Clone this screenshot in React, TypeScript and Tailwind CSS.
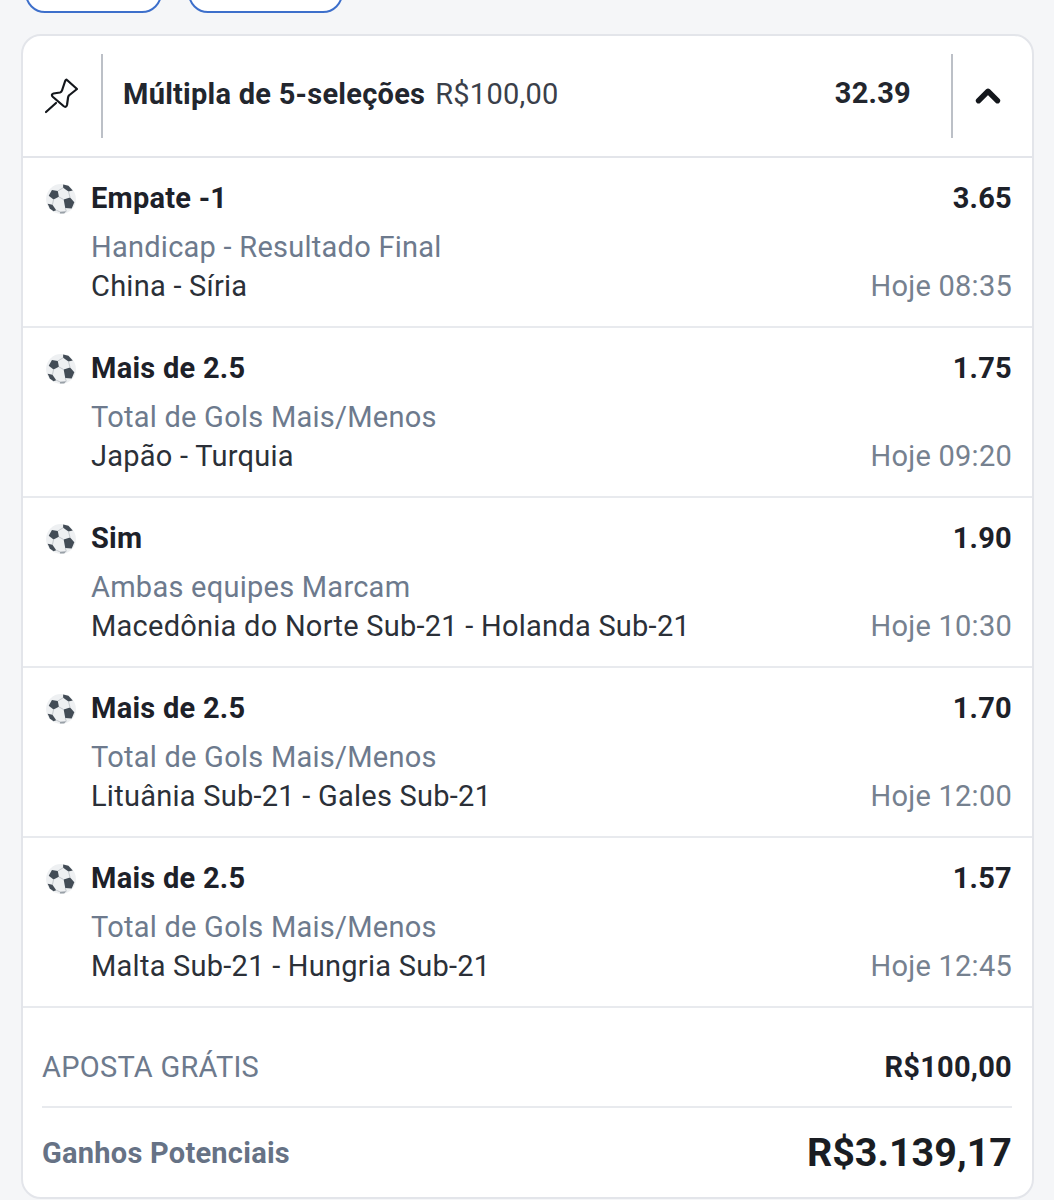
import { ChevronUp } from 'lucide-react';

const selections = [
  { pick: 'Empate -1', odd: '3.65', market: 'Handicap - Resultado Final', match: 'China - Síria', time: 'Hoje 08:35' },
  { pick: 'Mais de 2.5', odd: '1.75', market: 'Total de Gols Mais/Menos', match: 'Japão - Turquia', time: 'Hoje 09:20' },
  { pick: 'Sim', odd: '1.90', market: 'Ambas equipes Marcam', match: 'Macedônia do Norte Sub-21 - Holanda Sub-21', time: 'Hoje 10:30' },
  { pick: 'Mais de 2.5', odd: '1.70', market: 'Total de Gols Mais/Menos', match: 'Lituânia Sub-21 - Gales Sub-21', time: 'Hoje 12:00' },
  { pick: 'Mais de 2.5', odd: '1.57', market: 'Total de Gols Mais/Menos', match: 'Malta Sub-21 - Hungria Sub-21', time: 'Hoje 12:45' },
];

function Ball() {
  return (
    <svg viewBox="0 0 30 30" className="w-[32px] h-[32px] shrink-0">
      <circle cx="15" cy="15" r="14" fill="#eef0f2" />
      <path d="M6.5 6.5 L12 7.5 L13 13 L8 15.5 L3.5 12 Z" fill="#434c56" />
      <path d="M17.5 15.5 L23.5 13.5 L27.5 18 L25 24 L19 23.5 Z" fill="#434c56" />
      <path d="M17 1.5 L22 2.5 L26 7 L22 8 L17 4.5 Z" fill="#434c56" />
      <path d="M2.5 19.5 L7 20.5 L10.5 25.5 L8 26.5 L4.5 24 Z" fill="#434c56" />
      <path d="M14 27 L20 26.5 L18 28.7 L14 28.7 Z" fill="#9aa1a8" />
      <path d="M12 7.5 L17 4.5 M22 8 L23.5 13.5 M13 13 L17.5 15.5 M8 15.5 L7 20.5 M10.5 25.5 L14 27 M19 23.5 L20 26.5" stroke="#b4b9bf" strokeWidth="0.7" fill="none" />
    </svg>
  );
}

function PinIcon() {
  return (
    <svg viewBox="0 0 44 44" className="w-[44px] h-[44px]" fill="none" stroke="#14171c" strokeWidth="2.2" strokeLinecap="round" strokeLinejoin="round">
      <path d="M6 38 L16 29" />
      <path d="M27 6 L37 15 L29.5 21 Q28 22 28 24 L27 31 Q26 34 23.5 32 L13 23 Q10.5 20.5 13.5 19.5 L20 18.5 Q21.5 18 22 16.5 L25 7.5 Q26 5 27 6 Z" />
    </svg>
  );
}

function SelectionRow({ pick, odd, market, match, time }: (typeof selections)[number]) {
  return (
    <div className="h-[170px] border-b-2 border-[#e8eaee] pl-[22px] pr-[20px] pt-[23px]">
      <div className="flex items-center justify-between h-[36px]">
        <div className="flex items-center gap-[14px]">
          <Ball />
          <span className="font-bold text-[#1d2129] tracking-[0.25px]">{pick}</span>
        </div>
        <span className="font-bold text-[#1d2129] tracking-[0.25px]">{odd}</span>
      </div>
      <div className="ml-[46px] mt-[12px] text-[#6d7a8d] tracking-[0.25px] leading-[36px]">{market}</div>
      <div className="ml-[46px] mt-[3px] flex justify-between leading-[36px] tracking-[0.25px]">
        <span className="text-[#2b3038]">{match}</span>
        <span className="text-[#76818f]">{time}</span>
      </div>
    </div>
  );
}

export default function App() {
  return (
    <div className="w-[1054px] h-[1200px] overflow-hidden bg-[#f5f6f8] font-['Roboto',sans-serif] text-[29px]">
      <div className="h-[34px] pl-[25px] flex gap-[26px] overflow-hidden">
        <div className="w-[137px] h-[40px] -mt-[27px] rounded-[20px] border-[2.5px] border-[#3d6fcb] bg-white" />
        <div className="w-[155px] h-[40px] -mt-[27px] rounded-[20px] border-[2.5px] border-[#3d6fcb] bg-white" />
      </div>

      <div className="ml-[21px] w-[1013px] h-[1165px] rounded-[20px] border-2 border-[#e3e5ea] bg-white overflow-hidden">
        <div className="h-[122px] border-b-2 border-[#e3e5ea] flex items-center">
          <div className="w-[78px] flex justify-center">
            <PinIcon />
          </div>
          <div className="w-[2px] h-[84px] bg-[#bcc0c7]" />
          <div className="flex-1 flex items-center pl-[20px] pb-[2px]">
            <span className="font-bold text-[#22262e] tracking-[0.25px]">Múltipla de 5-seleções</span>
            <span className="ml-[10px] text-[#3a404a] tracking-[0.25px]">R$100,00</span>
          </div>
          <span className="font-bold text-[#22262e] mr-[40px] pb-[4px] tracking-[0.25px]">32.39</span>
          <div className="w-[2px] h-[84px] bg-[#bcc0c7]" />
          <div className="w-[79px] flex justify-center pr-[10px]">
            <ChevronUp size={38} strokeWidth={3.4} className="text-[#14171c]" />
          </div>
        </div>

        {selections.map((s, i) => <SelectionRow key={i} {...s} />)}

        <div className="pl-[19px] pr-[20px]">
          <div className="h-[100px] flex items-center justify-between border-b-2 border-[#e8eaee] pt-[21px]">
            <span className="text-[#6d7a8d] tracking-[0.25px]">APOSTA GRÁTIS</span>
            <span className="font-bold text-[#1d2129] tracking-[0.25px]">R$100,00</span>
          </div>
          <div className="h-[90px] flex items-center justify-between">
            <span className="font-bold text-[#667285] tracking-[0.25px] pt-[2px]">Ganhos Potenciais</span>
            <span className="font-bold text-[39.5px] text-[#1a1d23]">R$3.139,17</span>
          </div>
        </div>
      </div>
    </div>
  );
}
